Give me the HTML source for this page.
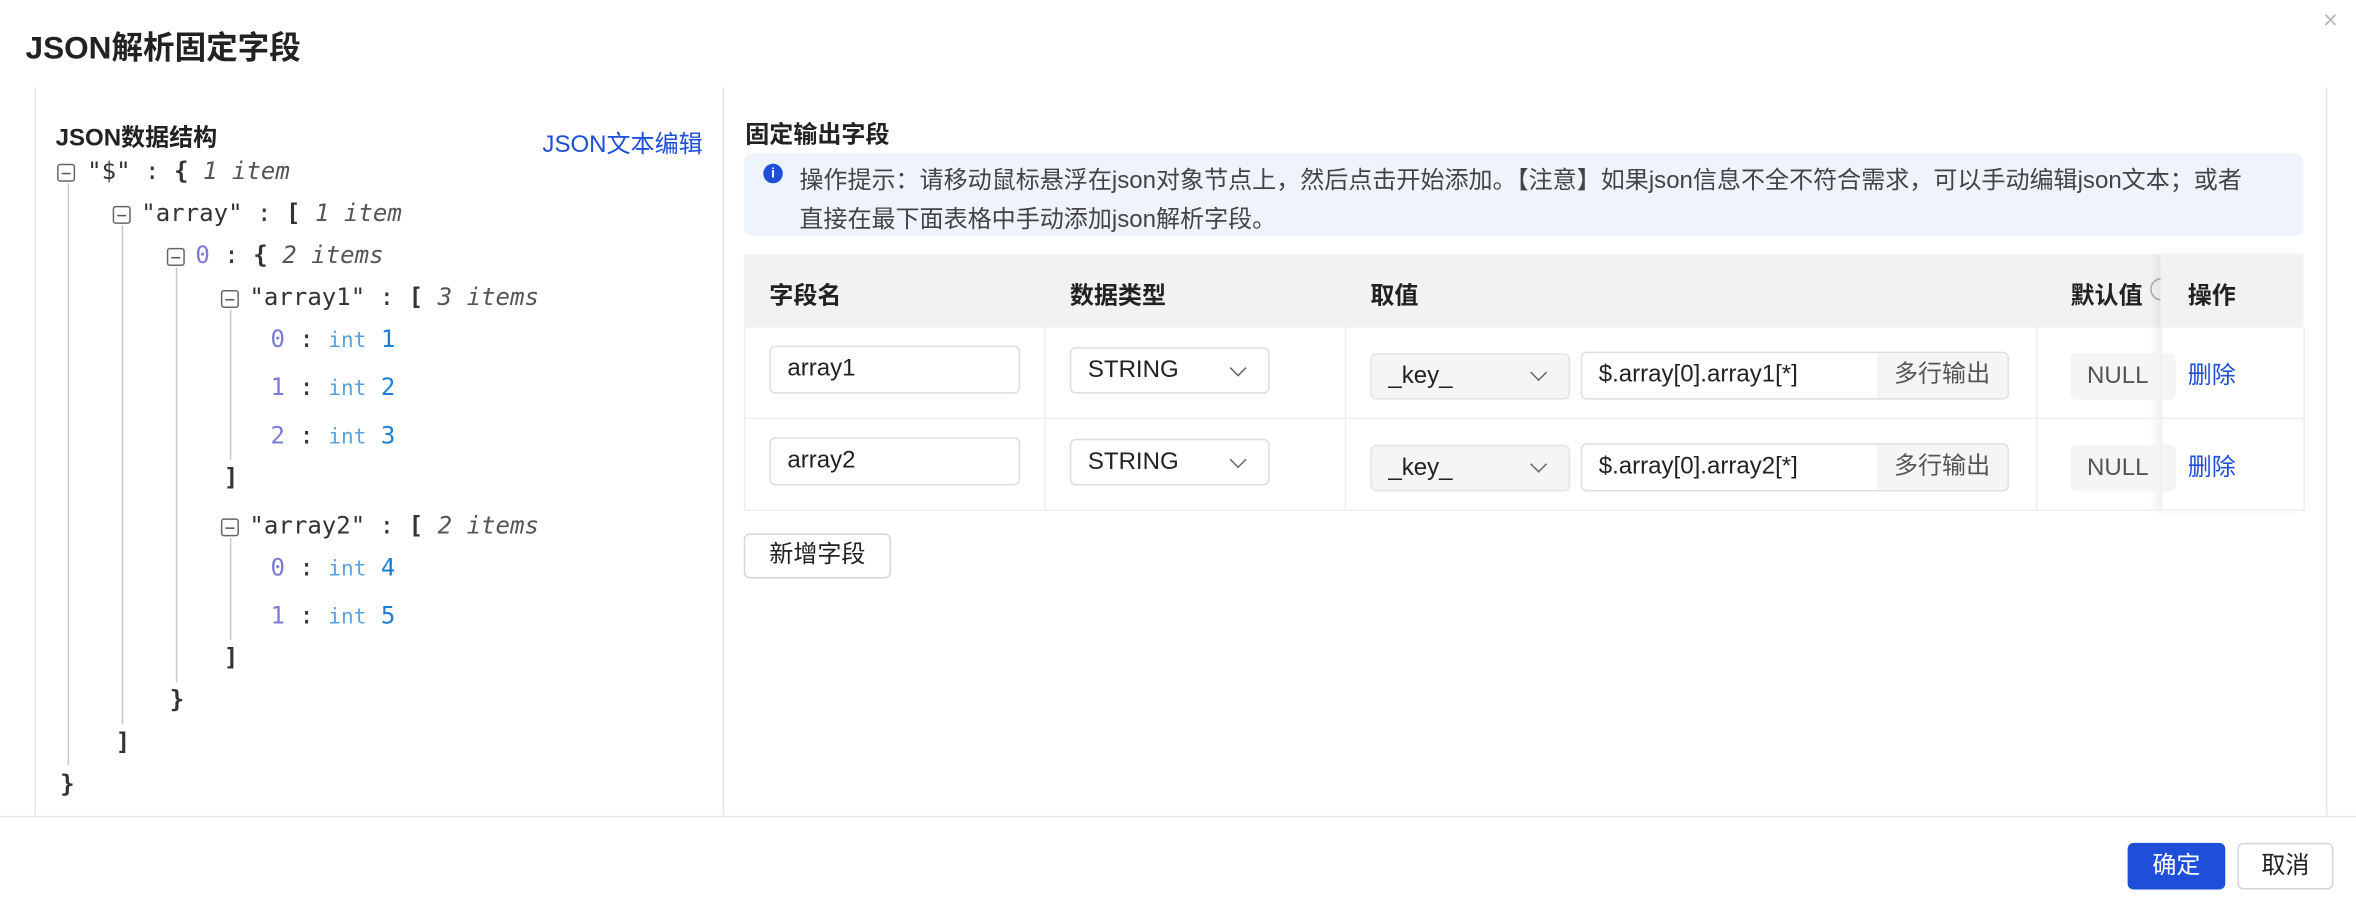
<!DOCTYPE html>
<html><head><meta charset="utf-8"><style>
*{box-sizing:border-box;margin:0;padding:0}
html,body{width:2356px;height:900px;overflow:hidden;background:#fff}
#w{position:absolute;left:0;top:0;width:1568px;height:599px;transform:scale(1.50255);transform-origin:0 0;font-family:"Liberation Sans","Noto Sans CJK SC",sans-serif;color:#222;font-size:16px}
.a{position:absolute;white-space:nowrap}
.m{font-family:"DejaVu Sans Mono","Liberation Mono",monospace;font-size:16px;color:#333}
.box{position:absolute;width:12px;height:12px;border:1px solid #666;border-radius:2px}
.box:after{content:"";position:absolute;left:2px;right:2px;top:4.5px;height:1px;background:#555}
.vl{position:absolute;width:1px;background:#c8c8c8}
.idx{color:#7b7bd4}.int{color:#5aa3e0;font-size:14px}.num{color:#1c7fd6}.it{font-style:italic;color:#555}
.inp{position:absolute;border:1px solid #ddd;border-radius:4px;background:#fff;padding-left:11px;display:flex;align-items:center;font-size:16px}
.gray{background:#f5f5f5;border-color:#e4e4e4}
.chev{position:absolute;right:16px;top:9px;width:8px;height:8px;border-right:1px solid #666;border-bottom:1px solid #666;transform:rotate(45deg)}
.th{font-weight:600;color:#222}
.blue{color:#1f4fd8}
</style></head><body><div id="w">
<div class="a" style="left:17px;top:16px;font-size:21px;font-weight:600">JSON解析固定字段</div>
<div class="a" style="left:1546px;top:4px;font-size:17px;color:#bbb">×</div>
<div class="vl" style="left:23px;top:58px;height:485px;background:#e6e6e6"></div>
<div class="vl" style="left:481px;top:58px;height:485px;background:#e6e6e6"></div>
<div class="vl" style="left:1548px;top:58px;height:485px;background:#e6e6e6"></div>
<div class="a" style="left:0;top:543px;width:1568px;height:1px;background:#e8e8e8"></div>
<div class="a" style="left:1416px;top:561px;width:65px;height:31px;background:#1f4fd8;border-radius:4px;color:#fff;text-align:center;line-height:31px">确定</div>
<div class="a" style="left:1489px;top:561px;width:64px;height:31px;border:1px solid #d6d6d6;border-radius:4px;text-align:center;line-height:29px">取消</div>

<div class="a" style="left:37px;top:78px;font-weight:600">JSON数据结构</div>
<div class="a blue" style="left:361px;top:82px">JSON文本编辑</div>
<div class="vl" style="left:45px;top:122px;height:387px"></div>
<div class="vl" style="left:81px;top:150px;height:332px"></div>
<div class="vl" style="left:117px;top:178px;height:276px"></div>
<div class="vl" style="left:153px;top:206px;height:100px"></div>
<div class="vl" style="left:153px;top:358px;height:68px"></div>
<div class="box" style="left:38px;top:109px"></div><div class="a m" style="left:58px;top:104px">"$" : <b>{</b> <span class="it">1 item</span></div>
<div class="box" style="left:75px;top:137px"></div><div class="a m" style="left:94px;top:132px">"array" : <b>[</b> <span class="it">1 item</span></div>
<div class="box" style="left:111px;top:165px"></div><div class="a m" style="left:130px;top:160px"><span class="idx">0</span> : <b>{</b> <span class="it">2 items</span></div>
<div class="box" style="left:147px;top:193px"></div><div class="a m" style="left:166px;top:188px">"array1" : <b>[</b> <span class="it">3 items</span></div>
<div class="a m" style="left:180px;top:216px"><span class="idx">0</span> : <span class="int">int</span> <span class="num">1</span></div>
<div class="a m" style="left:180px;top:248px"><span class="idx">1</span> : <span class="int">int</span> <span class="num">2</span></div>
<div class="a m" style="left:180px;top:280px"><span class="idx">2</span> : <span class="int">int</span> <span class="num">3</span></div>
<div class="a m" style="left:149px;top:308px"><b>]</b></div>
<div class="box" style="left:147px;top:345px"></div><div class="a m" style="left:166px;top:340px">"array2" : <b>[</b> <span class="it">2 items</span></div>
<div class="a m" style="left:180px;top:368px"><span class="idx">0</span> : <span class="int">int</span> <span class="num">4</span></div>
<div class="a m" style="left:180px;top:400px"><span class="idx">1</span> : <span class="int">int</span> <span class="num">5</span></div>
<div class="a m" style="left:149px;top:428px"><b>]</b></div>
<div class="a m" style="left:113px;top:456px"><b>}</b></div>
<div class="a m" style="left:77px;top:484px"><b>]</b></div>
<div class="a m" style="left:40px;top:512px"><b>}</b></div>

<div class="a" style="left:496px;top:76px;font-weight:600">固定输出字段</div>
<div class="a" style="left:495px;top:102px;width:1038px;height:55px;background:#eef3fc;border-radius:6px"></div>
<div class="a" style="left:508px;top:109px;width:13px;height:13px;border-radius:50%;background:#1f4fd8;color:#fff;font-size:9px;text-align:center;line-height:13px;font-weight:700">i</div>
<div class="a" style="left:532px;top:106px;color:#444">操作提示：请移动鼠标悬浮在json对象节点上，然后点击开始添加。【注意】如果json信息不全不符合需求，可以手动编辑json文本；或者</div>
<div class="a" style="left:532px;top:132px;color:#444">直接在最下面表格中手动添加json解析字段。</div>

<div class="a" style="left:495px;top:169px;width:1038px;height:49px;background:#f2f2f2"></div>
<div class="a th" style="left:512px;top:183px">字段名</div>
<div class="a th" style="left:712px;top:183px">数据类型</div>
<div class="a th" style="left:912px;top:183px">取值</div>
<div class="a th" style="left:1378px;top:183px">默认值</div>
<div class="a" style="left:1431px;top:185px;width:15px;height:15px;border:1px solid #aaa;border-radius:50%"></div>
<div class="a" style="left:1438px;top:169px;width:95px;height:171px;background:#fff;box-shadow:-4px 0 5px rgba(0,0,0,.05)"></div>
<div class="a" style="left:1438px;top:169px;width:95px;height:49px;background:#f2f2f2"></div>
<div class="a th" style="left:1456px;top:183px">操作</div>
<div class="a" style="left:495px;top:218px;width:1px;height:122px;background:#eee"></div>
<div class="a" style="left:695px;top:218px;width:1px;height:122px;background:#eee"></div>
<div class="a" style="left:895px;top:218px;width:1px;height:122px;background:#eee"></div>
<div class="a" style="left:1355px;top:218px;width:1px;height:122px;background:#eee"></div>
<div class="a" style="left:1533px;top:218px;width:1px;height:122px;background:#eee"></div>
<div class="a" style="left:495px;top:278px;width:1038px;height:1px;background:#eee"></div>
<div class="a" style="left:495px;top:339px;width:1038px;height:1px;background:#eee"></div>

<div class="inp" style="left:512px;top:230px;width:167px;height:32px">array1</div>
<div class="inp" style="left:712px;top:231px;width:133px;height:31px">STRING<i class="chev"></i></div>
<div class="inp gray" style="left:912px;top:235px;width:133px;height:31px">_key_<i class="chev" style="top:8px"></i></div>
<div class="inp" style="left:1052px;top:234px;width:285px;height:32px;overflow:hidden">$.array[0].array1[*]<div class="a" style="left:196px;top:0;bottom:0;right:0;background:#f5f5f5;color:#555;text-align:center;line-height:30px">多行输出</div></div>
<div class="inp gray" style="left:1378px;top:235px;width:70px;height:31px;border:none;color:#555">NULL</div>
<div class="a blue" style="left:1456px;top:236px">删除</div>

<div class="inp" style="left:512px;top:291px;width:167px;height:32px">array2</div>
<div class="inp" style="left:712px;top:292px;width:133px;height:31px">STRING<i class="chev"></i></div>
<div class="inp gray" style="left:912px;top:296px;width:133px;height:31px">_key_<i class="chev" style="top:8px"></i></div>
<div class="inp" style="left:1052px;top:295px;width:285px;height:32px;overflow:hidden">$.array[0].array2[*]<div class="a" style="left:196px;top:0;bottom:0;right:0;background:#f5f5f5;color:#555;text-align:center;line-height:30px">多行输出</div></div>
<div class="inp gray" style="left:1378px;top:296px;width:70px;height:31px;border:none;color:#555">NULL</div>
<div class="a blue" style="left:1456px;top:297px">删除</div>
<div class="a" style="left:1438px;top:218px;width:1px;height:122px;background:#eee"></div>

<div class="a" style="left:495px;top:355px;width:98px;height:30px;border:1px solid #d6d6d6;border-radius:4px;text-align:center;line-height:28px">新增字段</div>
</div></body></html>
